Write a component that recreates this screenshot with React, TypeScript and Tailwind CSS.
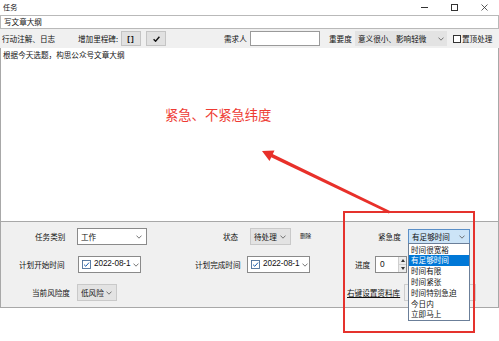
import React from "react";

const Chevron = () => (
  <svg width="6" height="4" viewBox="0 0 6 4" className="shrink-0">
    <path d="M0.5 0.6 L3 3.2 L5.5 0.6" fill="none" stroke="#555" strokeWidth="0.8" />
  </svg>
);

const CheckedBox = () => (
  <svg width="9" height="9" viewBox="0 0 9 9" className="shrink-0">
    <rect x="0.5" y="0.5" width="8" height="8" fill="#fff" stroke="#4a6f9a" strokeWidth="0.9" />
    <path d="M2 4.6 L3.8 6.3 L7 2.6" fill="none" stroke="#1b5fb0" strokeWidth="1" />
  </svg>
);

const DatePicker = ({ ml }: { ml: string }) => (
  <div className={`${ml} w-[63px] h-[17px] shrink-0 bg-white border border-[#8a8a8a] flex items-center pl-[3px] pr-[3px] gap-[3px] overflow-hidden`}>
    <CheckedBox />
    <span className="text-[8.2px] whitespace-nowrap font-['Liberation_Sans',sans-serif] leading-none text-[#111] tracking-[-0.1px]">2022-08-1</span>
    <span className="ml-auto"><Chevron /></span>
  </div>
);

export default function App() {
  return (
    <div className="relative w-[499px] h-[341px] bg-white overflow-hidden text-[7.6px] leading-none text-[#111] font-['Noto_Sans_CJK_SC','Noto_Sans',sans-serif]">
      {/* title bar */}
      <div className="h-[15px] flex items-center pl-[3px]">
        <span className="text-[7.2px]">任务</span>
        <div className="ml-auto flex items-center">
          <div className="w-[7px] h-[1px] bg-[#333] mr-[23px]" />
          <div className="w-[7px] h-[7px] border border-[#333] mr-[23px]" />
          <svg width="7" height="7" viewBox="0 0 7 7" className="mr-[11px]">
            <path d="M0.5 0.5 L6.5 6.5 M6.5 0.5 L0.5 6.5" stroke="#333" strokeWidth="0.8" />
          </svg>
        </div>
      </div>

      {/* task name input */}
      <div className="h-[14px] border border-[#b9b9b9] flex items-center pl-[3px]">
        <span>写文章大纲</span>
      </div>

      {/* toolbar */}
      <div className="h-[19px] bg-[#f0f0f0] flex items-center">
        <span className="ml-[2px] w-[54px] shrink-0 whitespace-nowrap">行动注解、日志</span>
        <span className="ml-[22px] w-[41px] shrink-0 whitespace-nowrap">增加里程碑:</span>
        <div className="ml-[2px] w-[20px] h-[15px] shrink-0 bg-[#e1e1e1] border border-[#c4c4c4] flex items-center justify-center">
          <span className="font-['Liberation_Sans',sans-serif] font-bold text-[8px] tracking-[1px]">[]</span>
        </div>
        <div className="ml-[5px] w-[20px] h-[15px] shrink-0 bg-[#e1e1e1] border border-[#c4c4c4] flex items-center justify-center">
          <svg width="7" height="6" viewBox="0 0 7 6">
            <path d="M0.6 3.2 L2.6 5.2 L6.4 0.8" fill="none" stroke="#111" strokeWidth="1.4" />
          </svg>
        </div>
        <span className="ml-[58px] w-[23px] shrink-0 whitespace-nowrap">需求人</span>
        <div className="ml-[3px] w-[70px] h-[15px] shrink-0 bg-white border border-[#9a9a9a]" />
        <span className="ml-[9px] w-[23px] shrink-0 whitespace-nowrap">重要度</span>
        <div className="ml-[3px] w-[92px] h-[15px] shrink-0 bg-[#e3e3e3] flex items-center pl-[3px] pr-[3px]">
          <span className="whitespace-nowrap">意义很小、影响轻微</span>
          <span className="ml-auto"><Chevron /></span>
        </div>
        <div className="ml-[6px] w-[8px] h-[8px] shrink-0 bg-white border border-[#333]" />
        <span className="ml-[1px] whitespace-nowrap">置顶处理</span>
      </div>

      {/* main text area */}
      <div className="h-[173px] bg-white border-x border-[#a8a8a8] pl-[2px] pt-[3px] flex flex-col">
        <span className="whitespace-nowrap">根据今天选题，构思公众号文章大纲</span>
        <span className="ml-[162px] mt-[49px] text-[13.3px] text-[#ee3b33] whitespace-nowrap">紧急、不紧急纬度</span>
      </div>

      {/* properties panel */}
      <div className="h-[87px] bg-[#f0f0f0] border border-[#a8a8a8] pt-[6px] flex flex-col gap-[11px]">
        {/* row 1 */}
        <div className="flex items-center h-[17px]">
          <span className="ml-[34px] w-[30px] shrink-0 whitespace-nowrap">任务类别</span>
          <div className="ml-[12px] w-[70px] h-[17px] shrink-0 bg-white border border-[#8a8a8a] flex items-center pl-[3px] pr-[4px]">
            <span>工作</span>
            <span className="ml-auto"><Chevron /></span>
          </div>
          <span className="ml-[76px] w-[15px] shrink-0 whitespace-nowrap">状态</span>
          <div className="ml-[12px] w-[41px] h-[17px] shrink-0 bg-[#e3e3e3] border border-[#c9c9c9] flex items-center pl-[3px] pr-[4px]">
            <span className="whitespace-nowrap">待处理</span>
            <span className="ml-auto"><Chevron /></span>
          </div>
          <span className="ml-[9px] w-[12px] shrink-0 whitespace-nowrap text-[5.6px]">删除</span>
          <span className="ml-[66px] w-[22px] shrink-0 whitespace-nowrap">紧急度</span>
          <div className="ml-[8px] w-[62px] h-[16px] shrink-0 bg-[#cce4f7] border border-[#5b8fc7] flex items-center pl-[3px] pr-[4px]">
            <span className="whitespace-nowrap">有足够时间</span>
            <span className="ml-auto"><Chevron /></span>
          </div>
        </div>
        {/* row 2 */}
        <div className="flex items-center h-[17px]">
          <span className="ml-[18px] w-[47px] shrink-0 whitespace-nowrap">计划开始时间</span>
          <DatePicker ml="ml-[12px]" />
          <span className="ml-[54px] w-[47px] shrink-0 whitespace-nowrap">计划完成时间</span>
          <DatePicker ml="ml-[5px]" />
          <span className="ml-[45px] w-[15px] shrink-0 whitespace-nowrap">进度</span>
          <div className="ml-[5px] w-[32px] h-[17px] shrink-0 bg-white border border-[#8a8a8a] flex items-center pl-[4px]">
            <span className="font-['Liberation_Sans',sans-serif] text-[8.4px]">0</span>
            <div className="ml-auto w-[8px] h-full flex flex-col border-l border-[#cfcfcf]">
              <div className="flex-1 bg-[#ececec] border-b border-[#cfcfcf] flex items-center justify-center">
                <svg width="4" height="3" viewBox="0 0 4 3"><path d="M0 3 L2 0 L4 3 Z" fill="#333" /></svg>
              </div>
              <div className="flex-1 bg-[#ececec] flex items-center justify-center">
                <svg width="4" height="3" viewBox="0 0 4 3"><path d="M0 0 L2 3 L4 0 Z" fill="#333" /></svg>
              </div>
            </div>
          </div>
        </div>
        {/* row 3 */}
        <div className="flex items-center h-[17px]">
          <span className="ml-[31px] w-[38px] shrink-0 whitespace-nowrap">当前风险度</span>
          <div className="ml-[7px] w-[40px] h-[17px] shrink-0 bg-[#e3e3e3] border border-[#c9c9c9] flex items-center pl-[3px] pr-[4px]">
            <span className="whitespace-nowrap">低风险</span>
            <span className="ml-auto"><Chevron /></span>
          </div>
          <span className="ml-[230px] w-[54px] shrink-0 whitespace-nowrap underline underline-offset-[1px]">右键设置资料库</span>
          <div className="ml-[3px] w-[72px] h-[17px] shrink-0 border border-[#cdcdcd]" />
        </div>
      </div>

      {/* dropdown list (open) */}
      <div className="absolute left-[408px] top-[243px] w-[62px] bg-white border border-[#6b7f99] flex flex-col">
        {["时间很宽裕", "有足够时间", "时间有限", "时间紧张", "时间特别急迫", "今日内", "立即马上"].map((t, i) => (
          <div
            key={t}
            className={`h-[10.8px] flex items-center pl-[2px] whitespace-nowrap ${i === 1 ? "bg-[#0078d7] text-white" : ""}`}
          >
            {t}
          </div>
        ))}
      </div>

      {/* red annotation box */}
      <div className="absolute left-[343px] top-[211px] w-[132px] h-[122px] border-2 border-[#e5322d]" />

      {/* red arrow */}
      <svg className="absolute left-0 top-0 pointer-events-none" width="499" height="341" viewBox="0 0 499 341">
        <polygon points="389,213.5 390,211 271,153.2 269.6,156.6" fill="#e8302a" />
        <polygon points="262,151 274.5,150.5 269.5,161" fill="#e8302a" />
      </svg>
    </div>
  );
}
